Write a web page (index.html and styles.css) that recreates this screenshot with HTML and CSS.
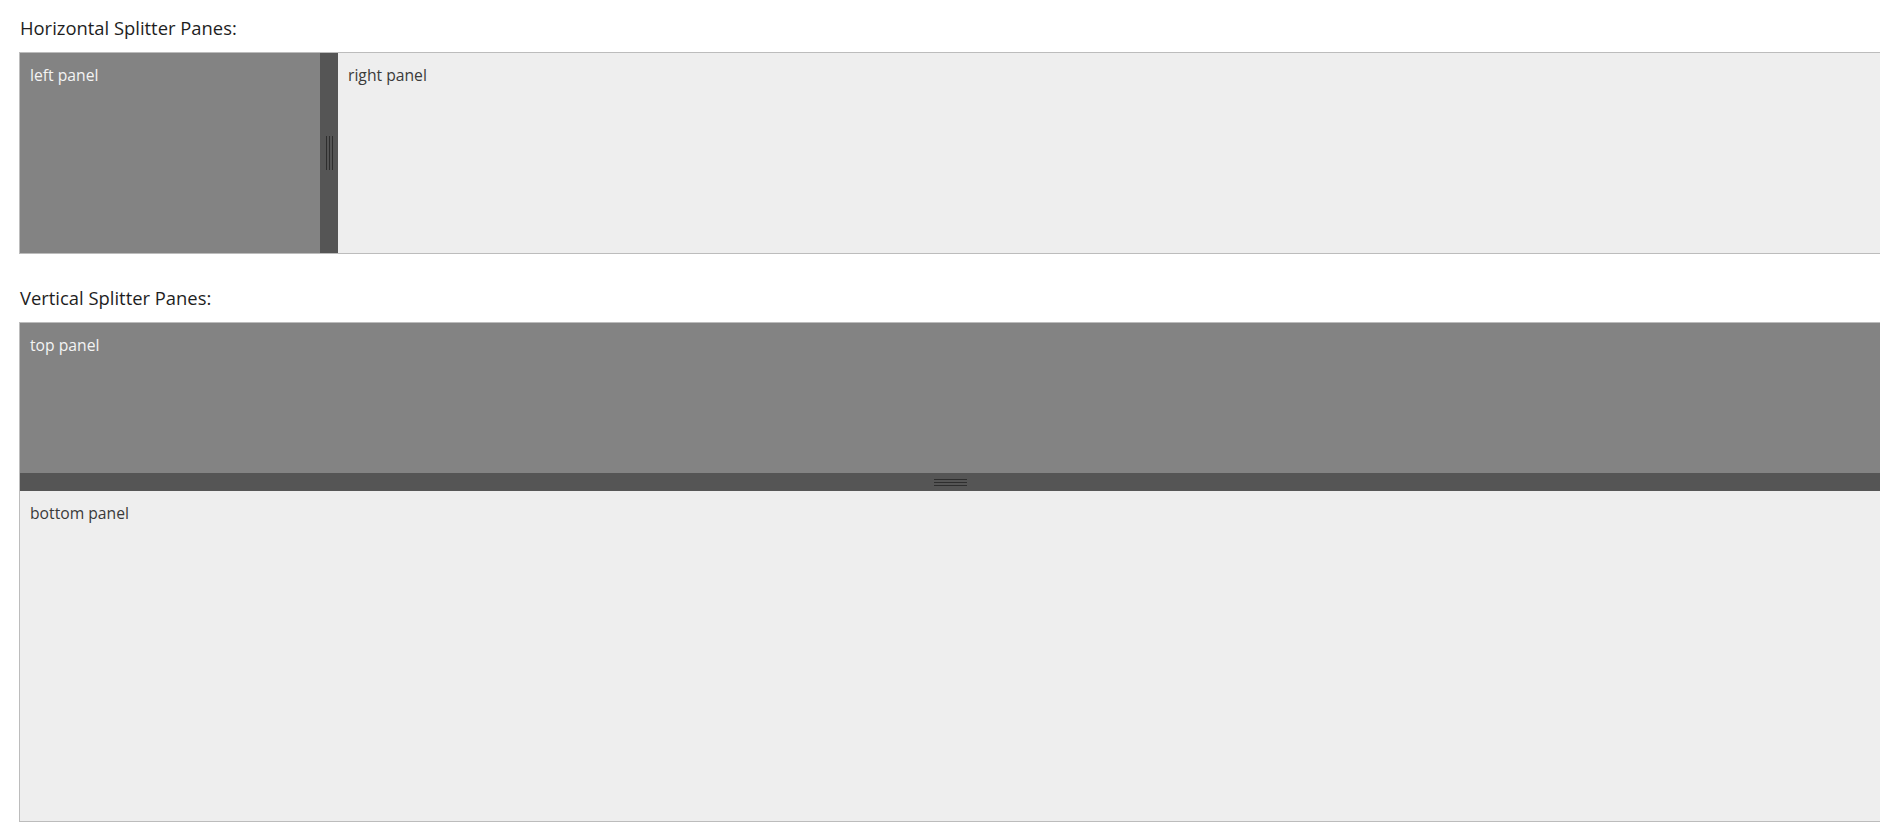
FILE: index.html
```html
<!DOCTYPE html>
<html>
<head>
<meta charset="utf-8">
<link rel="stylesheet" href="styles.css">
</head>
<body>
<div class="page">
  <section class="demo">
    <h3 class="title">Horizontal Splitter Panes:</h3>
    <div class="splitter horizontal">
      <div class="pane pane-dark pane-left">left panel</div>
      <div class="gutter gutter-v"><div class="grip grip-v"></div></div>
      <div class="pane pane-light pane-fill">right panel</div>
    </div>
  </section>
  <section class="demo">
    <h3 class="title">Vertical Splitter Panes:</h3>
    <div class="splitter vertical">
      <div class="pane pane-dark pane-top">top panel</div>
      <div class="gutter gutter-h"><div class="grip grip-h"></div></div>
      <div class="pane pane-light pane-fill">bottom panel</div>
    </div>
  </section>
</div>
</body>
</html>
```
FILE: styles.css
```css
html {
  overflow: hidden;
}
body {
  margin: 0;
  background: #fff;
  font-family: "Open Sans", "Noto Sans", sans-serif;
}
.page {
  padding-left: 19px;
}
.demo + .demo {
  margin-top: 32px;
}
.title {
  margin: 16px 0 12px;
  font-size: 18.4px;
  line-height: 24px;
  font-weight: 400;
  color: #1e1e1e;
  padding-left: 1px;
}
.splitter {
  display: flex;
  width: 100%;
  border: 1px solid #bcbcbc;
  border-right: none;
}
.splitter.horizontal {
  flex-direction: row;
  height: 200px;
}
.splitter.vertical {
  flex-direction: column;
  height: 498px;
}
.pane {
  box-sizing: border-box;
  padding: 11px 10px;
  font-size: 15.7px;
  line-height: 23px;
}
.pane-dark {
  background: #838383;
  color: #f4f4f4;
}
.pane-light {
  background: #eeeeee;
  color: #3a3a3a;
}
.pane-left {
  width: 300px;
  flex: none;
}
.pane-top {
  height: 150px;
  flex: none;
}
.pane-fill {
  flex: 1;
}
.gutter {
  flex: none;
  background: #555555;
  display: flex;
  align-items: center;
  justify-content: center;
}
.gutter-v {
  width: 18px;
}
.gutter-h {
  height: 18px;
}
.grip-v {
  width: 7px;
  height: 34px;
  background: linear-gradient(to right, #2e2e2e 0 1px, transparent 1px 3px, #2e2e2e 3px 4px, transparent 4px 6px, #2e2e2e 6px 7px);
}
.grip-h {
  width: 33px;
  height: 7px;
  background: linear-gradient(to bottom, #2e2e2e 0 1px, transparent 1px 3px, #2e2e2e 3px 4px, transparent 4px 6px, #2e2e2e 6px 7px);
}
```
